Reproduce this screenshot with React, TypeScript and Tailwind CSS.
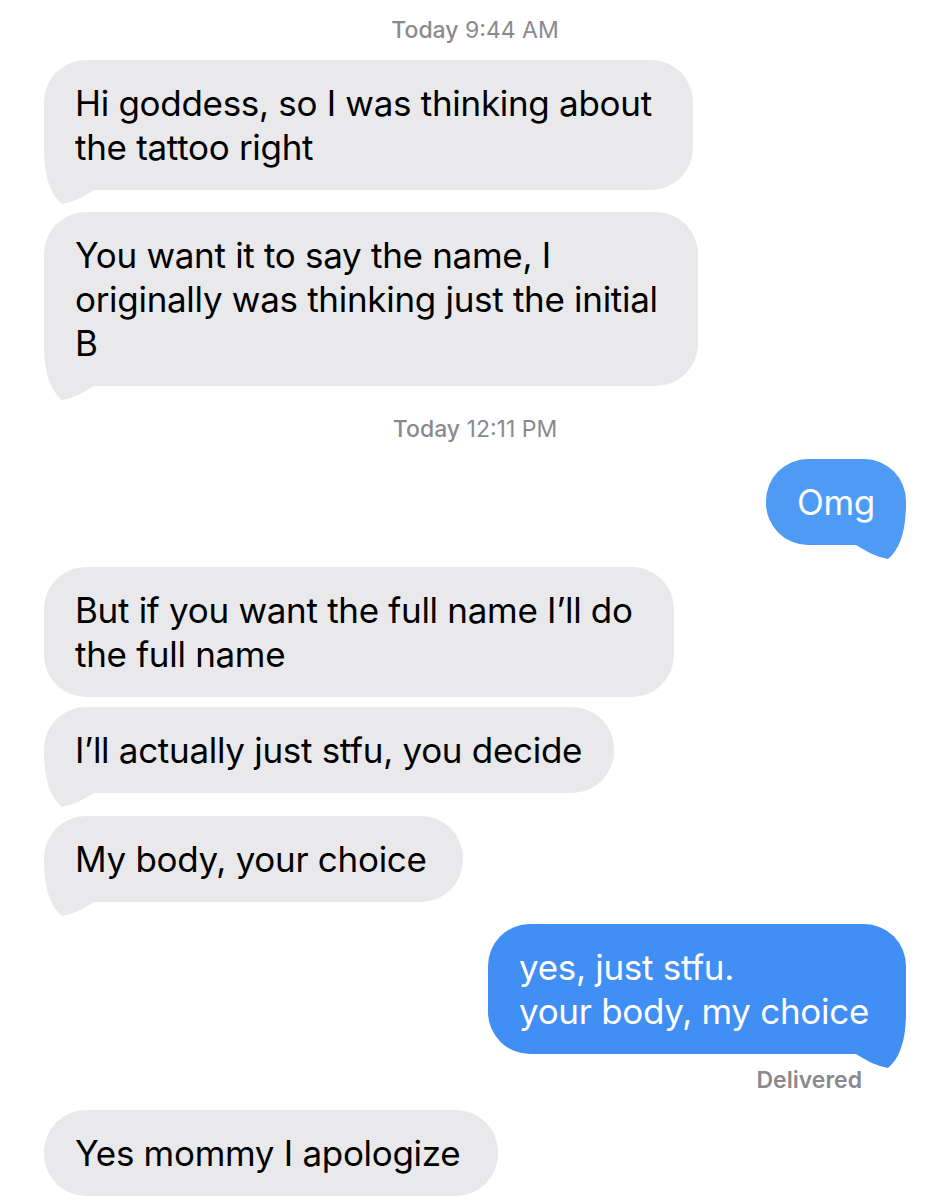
import React from 'react'

type Msg =
  | { kind: 'time'; day: string; time: string; cls: string }
  | { kind: 'in' | 'out'; lines: string[]; tail: boolean; cls: string; color?: string }
  | { kind: 'status'; text: string; cls: string }

const thread: Msg[] = [
  { kind: 'time', day: 'Today', time: '9:44 AM', cls: 'pt-[17px] h-[60px]' },
  {
    kind: 'in',
    lines: ['Hi goddess, so I was thinking about', 'the tattoo right'],
    tail: true,
    cls: 'w-[649px] mb-[22px]',
  },
  {
    kind: 'in',
    lines: ['You want it to say the name, I', 'originally was thinking just the initial', 'B'],
    tail: true,
    cls: 'w-[654px]',
  },
  { kind: 'time', day: 'Today', time: '12:11 PM', cls: 'pt-[30px] h-[73px]' },
  { kind: 'out', lines: ['Omg'], tail: true, cls: 'w-[140px] mb-[22px]', color: 'bg-[#4e9bf5]' },
  {
    kind: 'in',
    lines: ['But if you want the full name I\u2019ll do', 'the full name'],
    tail: false,
    cls: 'w-[630px] mb-[10px]',
  },
  { kind: 'in', lines: ['I\u2019ll actually just stfu, you decide'], tail: true, cls: 'w-[570px] mb-[23px]' },
  { kind: 'in', lines: ['My body, your choice'], tail: true, cls: 'w-[419px] mb-[22px]' },
  {
    kind: 'out',
    lines: ['yes, just stfu.', 'your body, my choice'],
    tail: true,
    cls: 'w-[418px]',
    color: 'bg-[#418ef4]',
  },
  { kind: 'status', text: 'Delivered', cls: 'h-[56px] pt-[13px]' },
  { kind: 'in', lines: ['Yes mommy I apologize'], tail: false, cls: 'w-[454px]' },
]

// bubble tail, drawn for the left side and mirrored for the right
const Tail = ({ side, fill }: { side: 'left' | 'right'; fill: string }) => (
  <svg
    width="50"
    height="56"
    viewBox="0 0 50 56"
    className={
      side === 'left'
        ? 'absolute left-0 bottom-[-14px]'
        : 'absolute right-0 bottom-[-14px] -scale-x-100'
    }
  >
    <path d="M0 0 C0 28 6 46 18 56 C29 54 39 49 50 42 L50 0 Z" fill={fill} />
  </svg>
)

export default function App() {
  return (
    <div
      className="w-[950px] h-[1200px] bg-white px-[44px] overflow-hidden flex flex-col"
      style={{ fontFamily: 'Inter, "Liberation Sans", sans-serif' }}
    >
      {thread.map((m, i) => {
        if (m.kind === 'time') {
          return (
            <div key={i} className={`text-center text-[23px] leading-[26px] text-[#8a8a8e] ${m.cls}`}>
              <span className="font-medium">{m.day}</span> <span>{m.time}</span>
            </div>
          )
        }
        if (m.kind === 'status') {
          return (
            <div key={i} className={`text-right pr-[44px] text-[23px] leading-[26px] font-semibold text-[#8a8a8e] ${m.cls}`}>
              {m.text}
            </div>
          )
        }
        const incoming = m.kind === 'in'
        const bg = incoming ? 'bg-[#e9e9eb]' : m.color
        const fill = incoming ? '#e9e9eb' : m.lines[0] === 'Omg' ? '#4e9bf5' : '#418ef4'
        return (
          <div key={i} className={`flex ${incoming ? 'justify-start' : 'justify-end'}`}>
            <div
              className={`relative rounded-[42px] py-[21px] pl-[31px] pr-[16px] text-[35px] leading-[44px] tracking-[-0.3px] ${bg} ${
                incoming ? 'text-black' : 'text-white'
              } ${m.cls}`}
            >
              {m.tail && <Tail side={incoming ? 'left' : 'right'} fill={fill} />}
              <div className="relative whitespace-nowrap">
                {m.lines.map((l, j) => (
                  <div key={j}>{l}</div>
                ))}
              </div>
            </div>
          </div>
        )
      })}
    </div>
  )
}
